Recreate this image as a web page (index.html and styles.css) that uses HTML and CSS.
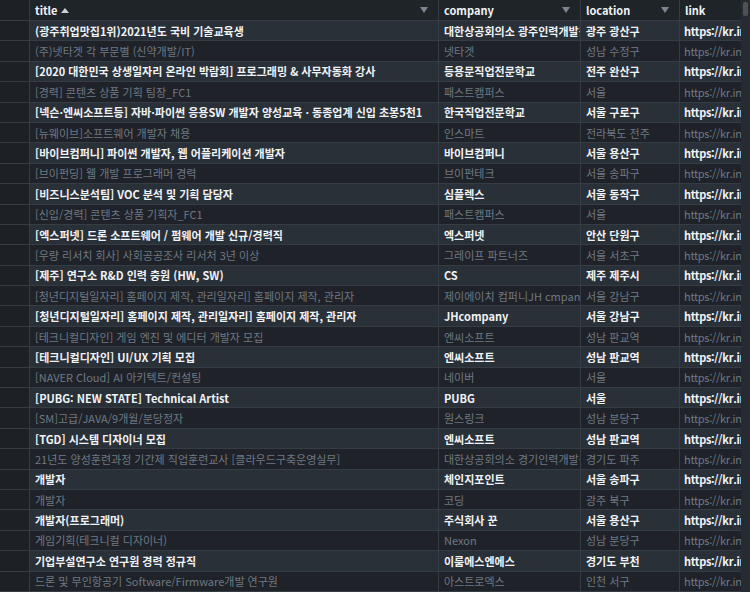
FILE: index.html
```html
<!DOCTYPE html>
<html lang="ko">
<head>
    <meta charset="UTF-8">
    <title>Job list</title>
    <link rel="stylesheet" href="styles.css">
</head>
<body>
    <div class="frame">
        <div class="grid">
            <div class="row head">
                <div class="cell idx"></div>
                <div class="cell">
                    <span class="label">title</span>
                    <svg class="sort" width="8" height="5" viewBox="0 0 8 5"><path d="M0 5 L4 0 L8 5 Z" fill="#c9d1d9"/></svg>
                    <svg class="filter" width="8" height="6" viewBox="0 0 8 6"><path d="M0 0 L8 0 L4 6 Z" fill="#7d8590"/></svg>
                </div>
                <div class="cell">
                    <span class="label">company</span>
                    <svg class="filter" width="8" height="6" viewBox="0 0 8 6"><path d="M0 0 L8 0 L4 6 Z" fill="#7d8590"/></svg>
                </div>
                <div class="cell">
                    <span class="label">location</span>
                    <svg class="filter" width="8" height="6" viewBox="0 0 8 6"><path d="M0 0 L8 0 L4 6 Z" fill="#7d8590"/></svg>
                </div>
                <div class="cell last"><span class="label">link</span></div>
            </div>

            <div class="row hi"><div class="cell idx"></div><div class="cell">(광주취업맛집1위)2021년도 국비 기술교육생</div><div class="cell">대한상공회의소 광주인력개발원</div><div class="cell">광주 광산구</div><div class="cell last link">https://kr.indeed.com/viewjob</div></div>
            <div class="row lo"><div class="cell idx"></div><div class="cell">(주)넷타겟 각 부문별 (신약개발/IT)</div><div class="cell">넷타겟</div><div class="cell">성남 수정구</div><div class="cell last link">https://kr.indeed.com/viewjob</div></div>
            <div class="row hi"><div class="cell idx"></div><div class="cell">[2020 대한민국 상생일자리 온라인 박람회] 프로그래밍 &amp; 사무자동화 강사</div><div class="cell">등용문직업전문학교</div><div class="cell">전주 완산구</div><div class="cell last link">https://kr.indeed.com/viewjob</div></div>
            <div class="row lo"><div class="cell idx"></div><div class="cell">[경력] 콘텐츠 상품 기획 팀장_FC1</div><div class="cell">패스트캠퍼스</div><div class="cell">서울</div><div class="cell last link">https://kr.indeed.com/viewjob</div></div>
            <div class="row hi"><div class="cell idx"></div><div class="cell">[넥슨·엔씨소프트등] 자바·파이썬 응용SW 개발자 양성교육 · 동종업계 신입 초봉5천1</div><div class="cell">한국직업전문학교</div><div class="cell">서울 구로구</div><div class="cell last link">https://kr.indeed.com/viewjob</div></div>
            <div class="row lo"><div class="cell idx"></div><div class="cell">[뉴웨이브]소프트웨어 개발자 채용</div><div class="cell">인스마트</div><div class="cell">전라북도 전주</div><div class="cell last link">https://kr.indeed.com/viewjob</div></div>
            <div class="row hi"><div class="cell idx"></div><div class="cell">[바이브컴퍼니] 파이썬 개발자, 웹 어플리케이션 개발자</div><div class="cell">바이브컴퍼니</div><div class="cell">서울 용산구</div><div class="cell last link">https://kr.indeed.com/viewjob</div></div>
            <div class="row lo"><div class="cell idx"></div><div class="cell">[브이펀딩] 웹 개발 프로그래머 경력</div><div class="cell">브이펀테크</div><div class="cell">서울 송파구</div><div class="cell last link">https://kr.indeed.com/viewjob</div></div>
            <div class="row hi"><div class="cell idx"></div><div class="cell">[비즈니스분석팀] VOC 분석 및 기획 담당자</div><div class="cell">심플렉스</div><div class="cell">서울 동작구</div><div class="cell last link">https://kr.indeed.com/viewjob</div></div>
            <div class="row lo"><div class="cell idx"></div><div class="cell">[신입/경력] 콘텐츠 상품 기획자_FC1</div><div class="cell">패스트캠퍼스</div><div class="cell">서울</div><div class="cell last link">https://kr.indeed.com/viewjob</div></div>
            <div class="row hi"><div class="cell idx"></div><div class="cell">[엑스퍼넷] 드론 소프트웨어 / 펌웨어 개발 신규/경력직</div><div class="cell">엑스퍼넷</div><div class="cell">안산 단원구</div><div class="cell last link">https://kr.indeed.com/viewjob</div></div>
            <div class="row lo"><div class="cell idx"></div><div class="cell">[우량 리서치 회사] 사회공공조사 리서처 3년 이상</div><div class="cell">그레이프 파트너즈</div><div class="cell">서울 서초구</div><div class="cell last link">https://kr.indeed.com/viewjob</div></div>
            <div class="row hi"><div class="cell idx"></div><div class="cell">[제주] 연구소 R&amp;D 인력 충원 (HW, SW)</div><div class="cell">CS</div><div class="cell">제주 제주시</div><div class="cell last link">https://kr.indeed.com/viewjob</div></div>
            <div class="row lo"><div class="cell idx"></div><div class="cell">[청년디지털일자리] 홈페이지 제작, 관리일자리] 홈페이지 제작, 관리자</div><div class="cell">제이에이치 컴퍼니JH cmpany</div><div class="cell">서울 강남구</div><div class="cell last link">https://kr.indeed.com/viewjob</div></div>
            <div class="row hi"><div class="cell idx"></div><div class="cell">[청년디지털일자리] 홈페이지 제작, 관리일자리] 홈페이지 제작, 관리자</div><div class="cell">JHcompany</div><div class="cell">서울 강남구</div><div class="cell last link">https://kr.indeed.com/viewjob</div></div>
            <div class="row lo"><div class="cell idx"></div><div class="cell">[테크니컬디자인] 게임 엔진 및 에디터 개발자 모집</div><div class="cell">엔씨소프트</div><div class="cell">성남 판교역</div><div class="cell last link">https://kr.indeed.com/viewjob</div></div>
            <div class="row hi"><div class="cell idx"></div><div class="cell">[테크니컬디자인] UI/UX 기획 모집</div><div class="cell">엔씨소프트</div><div class="cell">성남 판교역</div><div class="cell last link">https://kr.indeed.com/viewjob</div></div>
            <div class="row lo"><div class="cell idx"></div><div class="cell">[NAVER Cloud] AI 아키텍트/컨설팅</div><div class="cell">네이버</div><div class="cell">서울</div><div class="cell last link">https://kr.indeed.com/viewjob</div></div>
            <div class="row hi"><div class="cell idx"></div><div class="cell">[PUBG: NEW STATE] Technical Artist</div><div class="cell">PUBG</div><div class="cell">서울</div><div class="cell last link">https://kr.indeed.com/viewjob</div></div>
            <div class="row lo"><div class="cell idx"></div><div class="cell">[SM]고급/JAVA/9개월/분당정자</div><div class="cell">원스링크</div><div class="cell">성남 분당구</div><div class="cell last link">https://kr.indeed.com/viewjob</div></div>
            <div class="row hi"><div class="cell idx"></div><div class="cell">[TGD] 시스템 디자이너 모집</div><div class="cell">엔씨소프트</div><div class="cell">성남 판교역</div><div class="cell last link">https://kr.indeed.com/viewjob</div></div>
            <div class="row lo"><div class="cell idx"></div><div class="cell">21년도 양성훈련과정 기간제 직업훈련교사 [클라우드구축운영실무]</div><div class="cell">대한상공회의소 경기인력개발원</div><div class="cell">경기도 파주</div><div class="cell last link">https://kr.indeed.com/viewjob</div></div>
            <div class="row hi"><div class="cell idx"></div><div class="cell">개발자</div><div class="cell">체인지포인트</div><div class="cell">서울 송파구</div><div class="cell last link">https://kr.indeed.com/viewjob</div></div>
            <div class="row lo"><div class="cell idx"></div><div class="cell">개발자</div><div class="cell">코딩</div><div class="cell">광주 북구</div><div class="cell last link">https://kr.indeed.com/viewjob</div></div>
            <div class="row hi"><div class="cell idx"></div><div class="cell">개발자(프로그래머)</div><div class="cell">주식회사 꾼</div><div class="cell">서울 용산구</div><div class="cell last link">https://kr.indeed.com/viewjob</div></div>
            <div class="row lo"><div class="cell idx"></div><div class="cell">게임기획(테크니컬 디자이너)</div><div class="cell">Nexon</div><div class="cell">성남 분당구</div><div class="cell last link">https://kr.indeed.com/viewjob</div></div>
            <div class="row hi"><div class="cell idx"></div><div class="cell">기업부설연구소 연구원 경력 정규직</div><div class="cell">이룸에스엔에스</div><div class="cell">경기도 부천</div><div class="cell last link">https://kr.indeed.com/viewjob</div></div>
            <div class="row lo"><div class="cell idx"></div><div class="cell">드론 및 무인항공기 Software/Firmware개발 연구원</div><div class="cell">아스트로엑스</div><div class="cell">인천 서구</div><div class="cell last link">https://kr.indeed.com/viewjob</div></div>
        </div>
        <div class="scrollbar"><div class="thumb"></div></div>
    </div>
</body>
</html>
```

FILE: styles.css
```css
* {
    box-sizing: border-box;
    margin: 0;
    padding: 0;
}

body {
    background-color: #1f2328;
    font-family: "Noto Sans CJK KR", "Noto Sans", sans-serif;
    font-size: 11px;
    overflow: hidden;
}

.frame {
    display: flex;
    width: 750px;
    height: 592px;
    overflow: hidden;
}

.grid {
    width: 741px;
    flex: none;
}

.row {
    display: grid;
    grid-template-columns: 30px 409px 142px 99px 61px;
    height: 20.4px;
    border-bottom: 1px solid #363c44;
}

.row.head {
    height: 21px;
    background-color: #1f2429;
}

.row.hi {
    background-color: #2a3038;
    color: #f0f3f6;
    font-weight: 700;
}

.row.lo {
    background-color: #1f2329;
    color: #6f7883;
}

.cell {
    display: flex;
    align-items: center;
    padding-left: 5px;
    border-right: 1px solid #363c44;
    white-space: nowrap;
    overflow: hidden;
}

.cell.last {
    border-right: none;
}

.cell.link {
    padding-left: 4px;
    letter-spacing: -0.3px;
}

.cell.idx {
    background-color: #1d2126;
}

.head .cell {
    color: #f0f3f6;
    font-weight: 700;
}

.sort {
    margin-left: 4px;
    margin-top: 1px;
}

.filter {
    margin-left: auto;
    margin-right: 10px;
}

.scrollbar {
    width: 9px;
    height: 592px;
    background-color: #262b31;
    padding: 2px 2px 0 2px;
}

.thumb {
    width: 5px;
    height: 14px;
    background-color: #4b525a;
    border-radius: 2px;
}
```
